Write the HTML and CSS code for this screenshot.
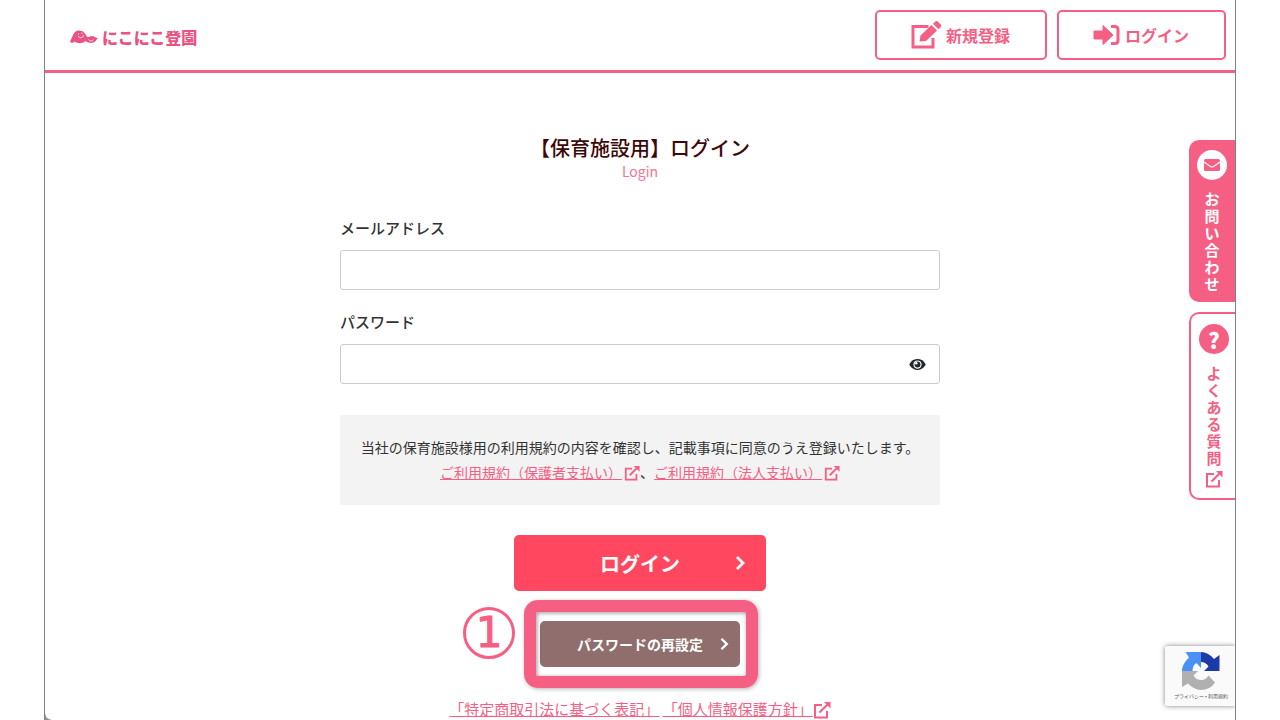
FILE: index.html
```html
<!DOCTYPE html>
<html lang="ja">
<head>
    <meta charset="UTF-8">
    <meta name="viewport" content="width=device-width, initial-scale=1.0">
    <title>【保育施設用】ログイン</title>
    <link rel="stylesheet" href="styles.css">
</head>
<body>
    <svg class="defs" aria-hidden="true">
        <symbol id="external" viewBox="0 0 18 18">
            <path d="M9 4H2v12.500h12V10" fill="none" stroke="currentColor" stroke-width="2"/>
            <path d="M6.500 11.500L14.500 3.500" stroke="currentColor" stroke-width="2.200"/>
            <path d="M11 1H17.500v6.500z" fill="currentColor"/>
        </symbol>
        <symbol id="chevron" viewBox="0 0 10 16">
            <path d="M1.500 2l6 6-6 6" fill="none" stroke="currentColor" stroke-width="2.800"/>
        </symbol>
    </svg>
    <div class="page">
        <header class="header">
            <a class="logo" href="#">
                <svg class="logo-mark" viewBox="0 0 28 14" aria-hidden="true">
                    <path d="M0 11.500C2 9 3 .500 9 .500c5 0 6 3.500 8 6 1.500 1.500 3-.500 5-.500s3 2 6 2c-1.500 1-2.500 5-6.500 5-3 0-4-1-6-2-2 2.500-8 3-11 .500C3.500 13 1 13.500 0 11.500z" fill="#ea5283"/>
                    <path d="M8 6c2 3 5.500 1.500 5.500-1M8.500 3.500v1.200M11.800 2.500v1.200M18.500 9.500c1 2 4 2 5 0" fill="none" stroke="#fff" stroke-width="0.800"/>
                </svg>
                <span>にこにこ登園</span>
            </a>
            <nav class="nav">
                <a class="nav-btn" href="#">
                    <svg class="icon-edit" viewBox="0 0 31 28" aria-hidden="true">
                        <path d="M17.500 5.500H2v20.500h20v-9" fill="none" stroke="currentColor" stroke-width="3"/>
                        <path d="M8.500 20.500l1-6L20.500 4l5.500 5.500L15 20zM22 2.800L24 .800c1-1 2-1 3 0l2.500 2.500c1 1 1 2 0 3l-2 2z" fill="currentColor"/>
                    </svg>
                    新規登録
                </a>
                <a class="nav-btn" href="#">
                    <svg class="icon-login" viewBox="0 0 28 22" aria-hidden="true">
                        <path d="M1 7h9V1.500l10 9.500-10 9.500V15H1z" fill="currentColor" stroke="currentColor" stroke-linejoin="round"/>
                        <path d="M18 2.500h4q3 0 3 3v11q0 3-3 3h-4" fill="none" stroke="currentColor" stroke-width="3"/>
                    </svg>
                    ログイン
                </a>
            </nav>
        </header>

        <main class="main">
            <h1>【保育施設用】ログイン</h1>
            <p class="sub">Login</p>
            <form class="form">
                <label for="email">メールアドレス</label>
                <input type="email" id="email" name="email">
                <label for="password">パスワード</label>
                <div class="password">
                    <input type="password" id="password" name="password">
                    <button type="button" class="eye" aria-label="パスワードを表示">
                        <svg viewBox="0 0 18 12" aria-hidden="true">
                            <path d="M0 6C4-2 14-2 18 6c-4 8-14 8-18 0z" fill="#212529"/>
                            <circle cx="9" cy="6" r="4.500" fill="#fff"/>
                            <circle cx="9" cy="6" r="3.200" fill="#212529"/>
                            <circle cx="7.600" cy="4.600" r="1.400" fill="#fff"/>
                        </svg>
                    </button>
                </div>
                <div class="terms">
                    <p>当社の保育施設様用の利用規約の内容を確認し、記載事項に同意のうえ登録いたします。</p>
                    <p><a href="#">ご利用規約（保護者支払い）<svg class="ext" aria-hidden="true"><use href="#external"/></svg></a>、<a href="#">ご利用規約（法人支払い）<svg class="ext" aria-hidden="true"><use href="#external"/></svg></a></p>
                </div>
                <button type="submit" class="btn login">ログイン<svg class="chevron" aria-hidden="true"><use href="#chevron"/></svg></button>
                <div class="reset-wrap">
                    <span class="step">1</span>
                    <button type="button" class="btn reset">パスワードの再設定<svg class="chevron" aria-hidden="true"><use href="#chevron"/></svg></button>
                    <span class="highlight"></span>
                </div>
            </form>
            <p class="legal">
                <a href="#">「特定商取引法に基づく表記」</a>
                <a href="#">「個人情報保護方針」<svg class="ext" aria-hidden="true"><use href="#external"/></svg></a>
            </p>
        </main>

        <aside class="side">
            <a class="tab contact" href="#">
                <span class="round">
                    <svg class="mail" viewBox="0 0 16 12" aria-hidden="true">
                        <rect width="16" height="12" rx="1.500" fill="currentColor"/>
                        <path d="M0 3l6.500 4.500q1.500 1 3 0L16 3" fill="none" stroke="#fff" stroke-width="1.200"/>
                    </svg>
                </span>
                <span class="tab-text">お問い合わせ</span>
            </a>
            <a class="tab faq" href="#">
                <span class="round">?</span>
                <span class="tab-text">よくある質問</span>
                <svg class="ext" aria-hidden="true"><use href="#external"/></svg>
            </a>
        </aside>

        <div class="recaptcha">
            <svg viewBox="0 0 38 38" aria-hidden="true">
                <path d="M19 0Q26 0 32 7L37.500 3V19H22l4.500-4.500Q24 10 19 10z" fill="#1c3aa9"/>
                <path d="M19 0V16L14.500 11Q10.500 13 10.500 19H0Q0 12 7 5.500L3.500 0z" fill="#4a90f5"/>
                <path d="M0 19H16l-4.500 4.500Q14 28 19.500 28q4 0 7-4.500l6.500 7Q28 38 19 38 12 38 6 31.500L0 35z" fill="#b0b0b0"/>
            </svg>
            <span>プライバシー • 利用規約</span>
        </div>
    </div>
</body>
</html>
```
FILE: styles.css
```css
* {
    box-sizing: border-box;
}

body {
    margin: 0;
    background: #fff;
    color: #333;
    font-family: "Noto Sans CJK JP", sans-serif;
    font-size: 15px;
}

a {
    color: #f55f84;
}

p {
    margin: 0;
}

button, input {
    font-family: inherit;
}

.defs {
    position: absolute;
    width: 0;
    height: 0;
}

.page {
    position: relative;
    min-height: 100vh;
    margin: 0 44px;
    border: solid #808080;
    border-width: 0 1px;
    overflow: hidden;
}

/* rounded corner of the window */
.page::after {
    content: "";
    position: absolute;
    left: 0;
    bottom: 0;
    width: 6px;
    height: 6px;
    background: radial-gradient(circle at top right, transparent 5px, #8494a4 6px);
}

/* header */
.header {
    display: flex;
    justify-content: space-between;
    align-items: center;
    padding: 10px 9px 10px 25px;
    border-bottom: 3px solid #f55f84;
}

.logo {
    display: flex;
    align-items: center;
    gap: 4px;
    padding-top: 4px;
    color: #ea5283;
    font-size: 16px;
    line-height: 24px;
    font-weight: 900;
    text-decoration: none;
}

.logo-mark {
    width: 28px;
    height: 14px;
}

.nav {
    display: flex;
    gap: 10px;
}

.nav-btn {
    display: flex;
    align-items: center;
    gap: 4px;
    height: 50px;
    padding: 0 35px 0 34px;
    border: 2px solid #f55f84;
    border-radius: 5px;
    font-size: 16px;
    font-weight: bold;
    text-decoration: none;
}

.icon-edit {
    width: 31px;
    height: 28px;
}

.icon-login {
    width: 28px;
    height: 22px;
}

/* login form */
.main {
    padding-top: 60px;
    text-align: center;
}

h1 {
    margin: 0;
    color: #3d0808;
    font-size: 20px;
    line-height: 30px;
    font-weight: 500;
}

.sub {
    color: #f8738f;
    font-size: 14px;
    line-height: 16px;
}

.form {
    display: flex;
    flex-direction: column;
    max-width: 600px;
    margin: 38px auto 0;
}

.form label {
    margin-bottom: 11px;
    text-align: left;
    line-height: 22px;
    font-weight: 500;
}

.form input {
    width: 100%;
    height: 40px;
    margin-bottom: 21px;
    padding: 0 12px;
    border: 1px solid #ccc;
    border-radius: 3px;
    font-size: 16px;
}

.password {
    position: relative;
}

.form .password input {
    display: block;
    margin: 0;
    padding-right: 44px;
}

.eye {
    position: absolute;
    right: 14px;
    top: 10px;
    display: flex;
    align-items: center;
    height: 20px;
    padding: 0;
    border: 0;
    background: none;
}

.eye svg {
    width: 17px;
    height: 11px;
}

.terms {
    margin: 31px 0 30px;
    padding: 20px;
    background: #f3f3f3;
    font-size: 14px;
    line-height: 25px;
}

.ext {
    width: 18px;
    height: 18px;
    vertical-align: -4px;
}

.terms .ext {
    width: 16px;
    height: 16px;
    margin-left: 2px;
    vertical-align: -3px;
}

.btn {
    position: relative;
    border: 0;
    border-radius: 5px;
    color: #fff;
    font-weight: bold;
}

.chevron {
    position: absolute;
    top: 50%;
    right: 20px;
    width: 11px;
    height: 16px;
    margin-top: -8px;
}

.login {
    align-self: center;
    width: 252px;
    height: 56px;
    padding: 0;
    background: #ff4860;
    font-size: 20px;
}

.reset-wrap {
    position: relative;
    align-self: center;
    margin-top: 30px;
}

.reset {
    display: block;
    width: 200px;
    height: 46px;
    padding: 0;
    background: #8f6e6d;
    font-size: 14px;
}

.reset .chevron {
    right: 10px;
    width: 11px;
    height: 14px;
    margin-top: -7px;
}

/* callout around the reset button */
.highlight {
    position: absolute;
    inset: -21px -18px -21px -16px;
    border: 12px solid #f55f84;
    border-radius: 14px;
    box-shadow: 1px 1px 4px rgba(0, 0, 0, 0.3), inset 1px 1px 4px rgba(0, 0, 0, 0.4);
    pointer-events: none;
}

.step {
    position: absolute;
    right: 100%;
    top: -14px;
    width: 52px;
    height: 52px;
    margin-right: 25px;
    border: 3px solid #f55f84;
    border-radius: 50%;
    color: #f55f84;
    font-family: "DejaVu Sans", sans-serif;
    font-size: 42px;
    line-height: 46px;
    -webkit-text-stroke: 1px #f55f84;
}

.legal {
    margin-top: 31px;
    line-height: 22px;
}

/* side tabs */
.side {
    position: absolute;
    top: 140px;
    right: 0;
    display: flex;
    flex-direction: column;
    gap: 10px;
}

.tab {
    display: flex;
    flex-direction: column;
    align-items: center;
    gap: 10px;
    width: 46px;
    padding: 10px 0;
    border-radius: 10px 0 0 10px;
    font-size: 15px;
    font-weight: bold;
    text-decoration: none;
}

/* one character per line */
.tab-text {
    width: 15px;
    line-height: 17px;
    word-break: break-all;
}

.round {
    display: flex;
    align-items: center;
    justify-content: center;
    width: 30px;
    height: 30px;
    border-radius: 50%;
}

.contact {
    background: #f55f84;
    color: #fff;
}

.contact .round {
    background: #fff;
    color: #f55f84;
}

.mail {
    width: 16px;
    height: 12px;
}

.faq {
    padding-left: 2px;
    border: 2px solid #f55f84;
    border-right: 0;
}

.faq .round {
    background: #f55f84;
    color: #fff;
    font-size: 22px;
    font-weight: 900;
}

.faq .ext {
    margin-top: -6px;
}

/* recaptcha badge */
.recaptcha {
    position: absolute;
    right: 0;
    bottom: 14px;
    display: flex;
    flex-direction: column;
    align-items: center;
    width: 70px;
    height: 60px;
    padding: 6px 0 0 2px;
    border-radius: 2px 0 0 2px;
    background: #fafafa;
    box-shadow: 0 0 5px #808080;
    color: #555;
    font-size: 5px;
    line-height: 12px;
    white-space: nowrap;
}

.recaptcha svg {
    width: 38px;
    height: 38px;
}
```
